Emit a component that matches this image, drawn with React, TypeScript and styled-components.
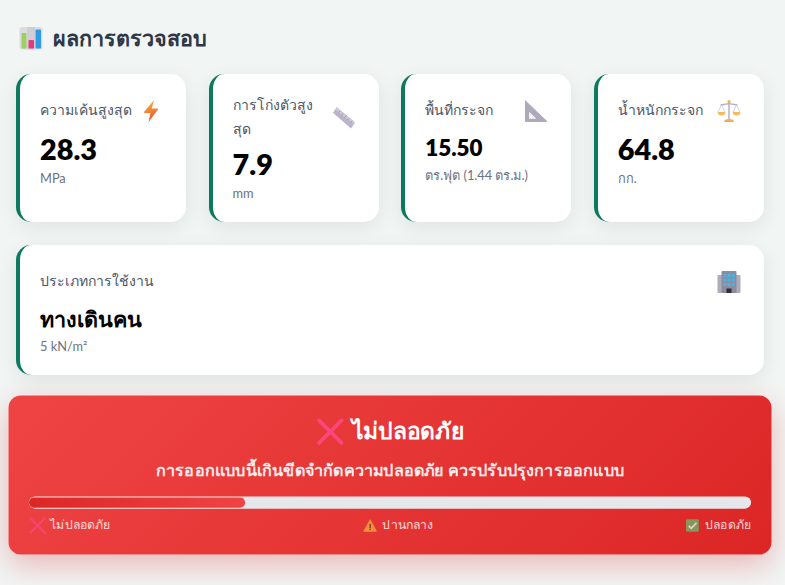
import React from 'react';
import styled, {createGlobalStyle} from 'styled-components';

const GlobalStyle = createGlobalStyle`
  html, body {
    margin: 0;
    padding: 0;
    background: #f1f6f5;
  }
  body {
    font-family: "Lato", sans-serif;
  }
`;

const ChartIcon = () => (
  <svg width="24" height="24" viewBox="0 0 24 24">
    <rect x="0.5" y="1" width="23" height="22.5" rx="2.5" fill="#dcdbe2" />
    <rect x="8" y="1" width="8" height="22.5" fill="#cfcdd6" />
    <rect x="2.5" y="7" width="5" height="15.5" rx="1" fill="#9cd161" />
    <rect x="9.5" y="14" width="5.5" height="8.5" rx="1" fill="#e5387f" />
    <rect x="16.5" y="3.5" width="5.5" height="19" rx="1" fill="#2f9be8" />
  </svg>
);

const BoltIcon = () => (
  <svg width="24" height="24" viewBox="0 0 24 24">
    <defs>
      <linearGradient id="bolt" x1="0.4" y1="0" x2="0.6" y2="1">
        <stop offset="0" stopColor="#fbb03b" />
        <stop offset="1" stopColor="#ec4f35" />
      </linearGradient>
    </defs>
    <path d="M15 1 L5 13 Q4.8 14 6 14 L11.4 14 L9.6 23 L19 10.4 Q19.2 9.6 18 9.6 L12.8 9.6 Z" fill="url(#bolt)" />
  </svg>
);

const RulerIcon = () => (
  <svg width="24" height="24" viewBox="0 0 24 24">
    <path d="M4.8 1.2 L23 16.4 L19 22.6 L1 6.8 Z" fill="#b9b4c8" />
    <path d="M4.8 1.2 L23 16.4 L21.8 18.2 L3.2 3.4 Z" fill="#cdc9d9" />
    <path d="M8 5 L6.6 6.6 M11 7.4 L9.6 9 M14 9.9 L12.6 11.5 M17 12.4 L15.6 14 M20 14.9 L18.6 16.5" stroke="#8f88a8" strokeWidth="0.8" />
  </svg>
);

const SetSquareIcon = () => (
  <svg width="24" height="24" viewBox="0 0 24 24">
    <path fillRule="evenodd" d="M1 1 L23 22 Q23 23 22 23 L2 23 Q1 23 1 22 Z M5 13 L5 19.5 L12 19.5 Z" fill="#aeaabb" />
    <path d="M5 13 L5 19.5 L12 19.5 Z" fill="#f3f1f6" />
  </svg>
);

const ScalesIcon = () => (
  <svg width="24" height="24" viewBox="0 0 24 24">
    <rect x="11" y="2" width="2" height="18" fill="#c7c2d6" />
    <circle cx="12" cy="2.5" r="1.6" fill="#f0b450" />
    <path d="M3.5 6 L12 4.6 L20.5 6" stroke="#b4aec8" strokeWidth="1.3" fill="none" />
    <path d="M4.5 6 L1 13 M4.5 6 L8 13 M19.5 6 L16 13 M19.5 6 L23 13" stroke="#c7c2d6" strokeWidth="0.8" />
    <path d="M0.5 13 L8.5 13 Q8 16.5 4.5 16.5 Q1 16.5 0.5 13 Z" fill="#f4bb5e" />
    <path d="M15.5 13 L23.5 13 Q23 16.5 19.5 16.5 Q16 16.5 15.5 13 Z" fill="#f4bb5e" />
    <path d="M7 23 Q7 20 12 20 Q17 20 17 23 Z" fill="#f2b04c" />
  </svg>
);

const BuildingIcon = () => (
  <svg width="24" height="24" viewBox="0 0 24 24">
    <rect x="0.5" y="5" width="23" height="18" rx="1" fill="#aeacbc" />
    <rect x="4.5" y="1" width="15" height="22" rx="1" fill="#8d8b9c" />
    <path d="M6.3 4 h3 v3 h-3 Z M10.5 4 h3 v3 h-3 Z M14.7 4 h3 v3 h-3 Z M6.3 8.5 h3 v3 h-3 Z M10.5 8.5 h3 v3 h-3 Z M14.7 8.5 h3 v3 h-3 Z M6.3 13 h3 v3 h-3 Z M10.5 13 h3 v3 h-3 Z M14.7 13 h3 v3 h-3 Z" fill="#43b5ea" />
    <rect x="9.5" y="18.5" width="5" height="4.5" fill="#2f2e3a" />
  </svg>
);

const CrossIcon = ({size}: {size: number}) => (
  <svg width={size} height={size} viewBox="1 1 22 22">
    <path d="M3 3 L21 21 M21 3 L3 21" stroke="#f8467f" strokeWidth="3" strokeLinecap="round" />
  </svg>
);

const WarningIcon = ({size}: {size: number}) => (
  <svg width={size} height={size} viewBox="-3 -3 30 30">
    <path d="M12 2 L23 22 L1 22 Z" fill="#f8a83c" stroke="#f8a83c" strokeWidth="1.5" strokeLinejoin="round" />
    <rect x="11" y="9" width="2.2" height="7.5" fill="#4a3a2a" />
    <rect x="11" y="17.6" width="2.2" height="2.2" fill="#4a3a2a" />
  </svg>
);

const CheckIcon = ({size}: {size: number}) => (
  <svg width={size} height={size} viewBox="-3 -3 30 30">
    <rect x="1" y="1" width="22" height="22" rx="2.5" fill="#6cb56a" />
    <path d="M5.5 12.5 L10 17 L19 7.5" stroke="#f2f2f2" strokeWidth="3" fill="none" />
  </svg>
);

type ResultCardProps = {
  label: React.ReactNode;
  value: string;
  unit: string;
  icon: React.ReactNode;
  valueSize?: number;
};

const ResultCard = ({label, value, unit, icon, valueSize}: ResultCardProps) => (
  <Card>
    <CardHeader>
      <CardLabel>{label}</CardLabel>
      <IconBox>{icon}</IconBox>
    </CardHeader>
    <CardValue $size={valueSize}>{value}</CardValue>
    <CardUnit $small={!!valueSize}>{unit}</CardUnit>
  </Card>
);

export default function App() {
  return (
    <>
      <GlobalStyle />
      <Page>
        <Title>
          <ChartIcon />
          <span>ผลการตรวจสอบ</span>
        </Title>

        <CardsGrid>
          <ResultCard label="ความเค้นสูงสุด" value="28.3" unit="MPa" icon={<BoltIcon />} />
          <ResultCard
            label={
              <>
                การโก่งตัวสูง
                <br />
                สุด
              </>
            }
            value="7.9"
            unit="mm"
            icon={<RulerIcon />}
          />
          <ResultCard label="พื้นที่กระจก" value="15.50" unit="ตร.ฟุต (1.44 ตร.ม.)" icon={<SetSquareIcon />} valueSize={22.4} />
          <ResultCard label="น้ำหนักกระจก" value="64.8" unit="กก." icon={<ScalesIcon />} />
        </CardsGrid>

        <WideCard>
          <ResultCard label="ประเภทการใช้งาน" value="ทางเดินคน" unit="5 kN/m²" icon={<BuildingIcon />} valueSize={21.6} />
        </WideCard>

        <Banner>
          <BannerTitle>
            <CrossIcon size={27} />
            <span>ไม่ปลอดภัย</span>
          </BannerTitle>
          <BannerText>การออกแบบนี้เกินขีดจำกัดความปลอดภัย ควรปรับปรุงการออกแบบ</BannerText>
          <ProgressTrack>
            <ProgressFill style={{width: '30%'}} />
          </ProgressTrack>
          <Legend>
            <LegendItem>
              <CrossIcon size={17} />
              ไม่ปลอดภัย
            </LegendItem>
            <LegendItem>
              <WarningIcon size={17} />
              ปานกลาง
            </LegendItem>
            <LegendItem>
              <CheckIcon size={17} />
              ปลอดภัย
            </LegendItem>
          </Legend>
        </Banner>
      </Page>
    </>
  );
}

const Page = styled.div`
  box-sizing: border-box;
  width: 785px;
  height: 585px;
  overflow: hidden;
  padding: 24px 21px 0 16px;
`;

const Title = styled.h2`
  display: flex;
  align-items: center;
  gap: 10px;
  margin: 0 0 22px 3px;
  height: 28px;
  font-size: 21.6px;
  font-weight: 700;
  color: #2d3748;
`;

const CardsGrid = styled.div`
  display: grid;
  grid-template-columns: repeat(4, 1fr);
  gap: 22.4px;
`;

const Card = styled.div`
  box-sizing: border-box;
  height: 100%;
  background: #fff;
  border-left: 4px solid #0d7a5f;
  border-radius: 15px;
  padding: 20px;
  box-shadow: 0 5px 20px rgba(0, 0, 0, 0.08);
`;

const WideCard = styled.div`
  margin-top: 23px;
`;

const CardHeader = styled.div`
  display: flex;
  align-items: center;
  justify-content: space-between;
  margin-bottom: 5px;
  min-height: 33px;
`;

const CardLabel = styled.div`
  margin: -1px 0 1px;
  font-size: 14px;
  line-height: 24px;
  font-weight: 500;
  color: #4a5568;
`;

const IconBox = styled.div`
  flex: 0 0 30px;
  display: flex;
  justify-content: center;
`;

const CardValue = styled.div<{$size?: number}>`
  font-size: ${({$size}) => $size ?? 28.8}px;
  line-height: ${({$size}) => ($size ? '32px' : '34px')};
  font-weight: 800;
  color: #000;
`;

const CardUnit = styled.div<{$small?: boolean}>`
  margin-top: ${({$small}) => ($small ? '2px' : '3px')};
  font-size: 12.8px;
  line-height: 18px;
  color: #6b7280;
`;

const Banner = styled.div`
  box-sizing: border-box;
  margin-top: 22px;
  height: 156px;
  padding: 20px;
  border-radius: 12px;
  text-align: center;
  color: #fff;
  background: linear-gradient(135deg, #ef4444, #dc2626);
  box-shadow: 0 10px 30px rgba(220, 38, 38, 0.3);
  transform: scale(1.02);
`;

const BannerTitle = styled.div`
  display: flex;
  justify-content: center;
  align-items: center;
  gap: 8px;
  font-size: 22.4px;
  line-height: 30px;
  font-weight: 700;
`;

const BannerText = styled.div`
  margin-top: 11px;
  font-size: 15.84px;
  line-height: 24px;
  font-weight: 600;
  opacity: 0.9;
`;

const ProgressTrack = styled.div`
  box-sizing: border-box;
  margin-top: 14px;
  height: 12px;
  padding: 1px 0;
  border-radius: 6px;
  background: #e5e7eb;
  overflow: hidden;
`;

const ProgressFill = styled.div`
  height: 100%;
  border-radius: 6px;
  background: linear-gradient(90deg, #dc2626, #ef4444);
`;

const Legend = styled.div`
  display: flex;
  justify-content: space-between;
  margin-top: 7px;
  font-size: 12px;
  line-height: 18px;
  opacity: 0.8;
`;

const LegendItem = styled.div`
  display: flex;
  align-items: center;
  gap: 4px;
`;
